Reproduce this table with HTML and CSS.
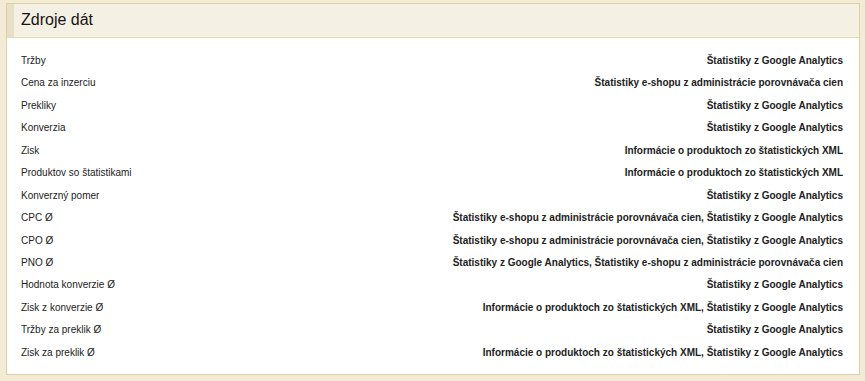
FILE: index.html
```html
<!DOCTYPE html>
<html lang="sk">
<head>
<meta charset="utf-8">
<title>Zdroje dát</title>
<link rel="stylesheet" href="styles.css">
</head>
<body>
<div class="panel">
  <div class="panel-head"><h2 class="panel-title">Zdroje dát</h2></div>
  <div class="panel-body">
    <div class="row"><span class="label">Tržby</span><span class="value">Štatistiky z Google Analytics</span></div>
    <div class="row"><span class="label">Cena za inzerciu</span><span class="value">Štatistiky e-shopu z administrácie porovnávača cien</span></div>
    <div class="row"><span class="label">Prekliky</span><span class="value">Štatistiky z Google Analytics</span></div>
    <div class="row"><span class="label">Konverzia</span><span class="value">Štatistiky z Google Analytics</span></div>
    <div class="row"><span class="label">Zisk</span><span class="value">Informácie o produktoch zo štatistických XML</span></div>
    <div class="row"><span class="label">Produktov so štatistikami</span><span class="value">Informácie o produktoch zo štatistických XML</span></div>
    <div class="row"><span class="label">Konverzný pomer</span><span class="value">Štatistiky z Google Analytics</span></div>
    <div class="row"><span class="label">CPC Ø</span><span class="value">Štatistiky e-shopu z administrácie porovnávača cien, Štatistiky z Google Analytics</span></div>
    <div class="row"><span class="label">CPO Ø</span><span class="value">Štatistiky e-shopu z administrácie porovnávača cien, Štatistiky z Google Analytics</span></div>
    <div class="row"><span class="label">PNO Ø</span><span class="value">Štatistiky z Google Analytics, Štatistiky e-shopu z administrácie porovnávača cien</span></div>
    <div class="row"><span class="label">Hodnota konverzie Ø</span><span class="value">Štatistiky z Google Analytics</span></div>
    <div class="row"><span class="label">Zisk z konverzie Ø</span><span class="value">Informácie o produktoch zo štatistických XML, Štatistiky z Google Analytics</span></div>
    <div class="row"><span class="label">Tržby za preklik Ø</span><span class="value">Štatistiky z Google Analytics</span></div>
    <div class="row"><span class="label">Zisk za preklik Ø</span><span class="value">Informácie o produktoch zo štatistických XML, Štatistiky z Google Analytics</span></div>
  </div>
</div>
</body>
</html>
```
FILE: styles.css
```css
html, body {
  margin: 0;
  padding: 0;
}
body {
  background: #f4ebd6;
  padding: 3px 5px 5px 6px;
  font-family: "Liberation Sans", Arial, sans-serif;
  color: #222;
}
.panel {
  background: #fff;
  border: 1px solid #dfd0a2;
}
.panel-head {
  background: #f5f0e4;
  border-left: 7px solid #e7dfc7;
  border-bottom: 1px solid #e6dab6;
  padding: 7px 7px 8px 7px;
}
.panel-title {
  margin: 0;
  font-size: 16px;
  line-height: 18px;
  font-weight: normal;
  color: #151515;
}
.panel-body {
  padding: 12px 16px 10px 14px;
}
.row {
  display: flex;
  justify-content: space-between;
  font-size: 10px;
  line-height: 22.45px;
  height: 22.45px;
}
.value {
  font-weight: bold;
  text-align: right;
}
```
